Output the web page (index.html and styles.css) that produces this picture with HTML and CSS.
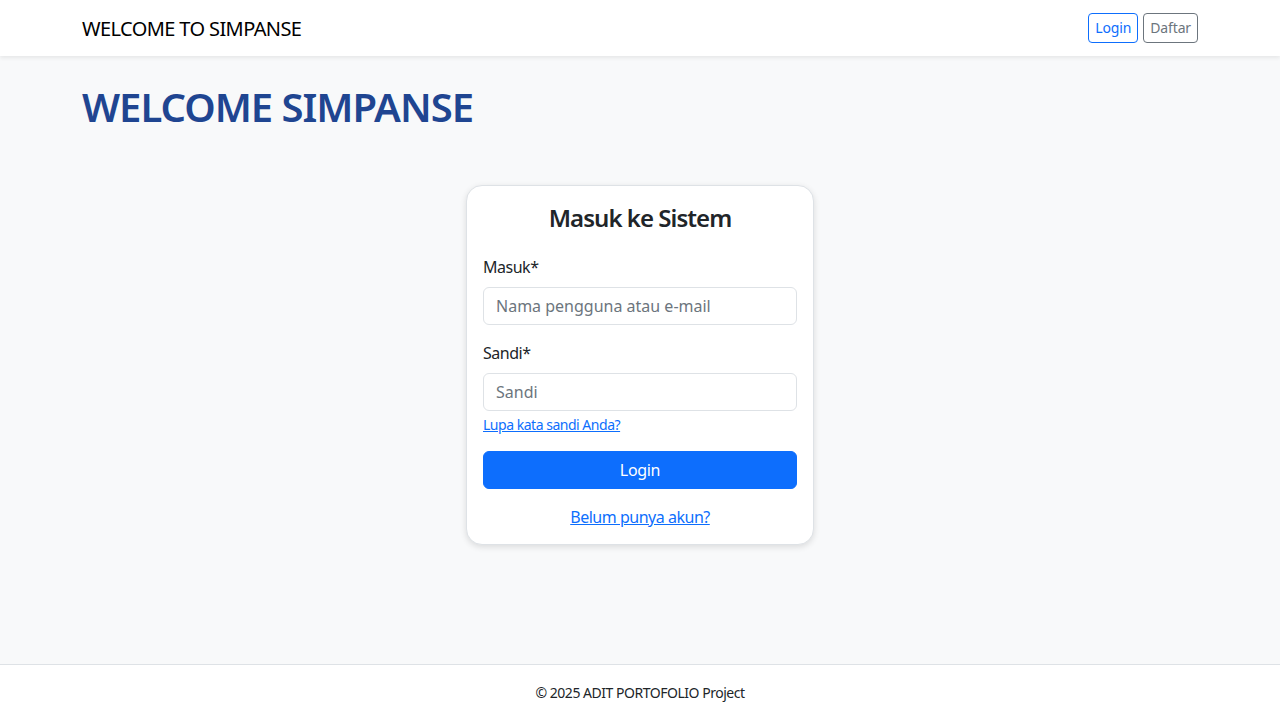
FILE: index.html
```html
<!DOCTYPE html>
<html lang="id">
<head>
<meta charset="utf-8">
<title>Simpanse</title>
<link rel="stylesheet" href="styles.css">
</head>
<body>
<nav class="navbar">
  <div class="container nav-inner">
    <a class="brand" href="#">WELCOME TO SIMPANSE</a>
    <div class="nav-actions">
      <a class="btn-sm btn-outline-primary" href="#">Login</a>
      <a class="btn-sm btn-outline-secondary" href="#">Daftar</a>
    </div>
  </div>
</nav>
<main class="container main">
  <h1 class="page-title">WELCOME SIMPANSE</h1>
  <div class="card">
    <h3 class="card-title">Masuk ke Sistem</h3>
    <form class="form">
      <div class="field">
        <label class="label" for="user">Masuk*</label>
        <input class="input" id="user" type="text" placeholder="Nama pengguna atau e-mail">
      </div>
      <div class="field">
        <label class="label" for="pass">Sandi*</label>
        <input class="input" id="pass" type="password" placeholder="Sandi">
        <a class="forgot" href="#">Lupa kata sandi Anda?</a>
      </div>
      <button class="btn-primary" type="button">Login</button>
      <div class="register"><a href="#">Belum punya akun?</a></div>
    </form>
  </div>
</main>
<footer class="footer">© 2025 ADIT PORTOFOLIO Project</footer>
</body>
</html>
```
FILE: styles.css
```css
* { box-sizing: border-box; }
html, body { margin: 0; padding: 0; }
body {
  font-family: "Noto Sans", "Open Sans", sans-serif;
  font-size: 16px;
  line-height: 1.5;
  letter-spacing: -0.03em;
  color: #212529;
  background: #f8f9fa;
  min-height: 100vh;
  display: flex;
  flex-direction: column;
}
.container {
  width: 1140px;
  margin: 0 auto;
  padding: 0 12px;
}
.navbar {
  background: #fff;
  height: 56px;
  box-shadow: 0 2px 4px rgba(0,0,0,0.075);
  display: flex;
  align-items: center;
}
.nav-inner {
  display: flex;
  justify-content: space-between;
  align-items: center;
}
.brand {
  font-size: 20px;
  color: #000;
  text-decoration: none;
  line-height: 30px;
  margin-top: 2px;
  letter-spacing: -0.03em;
}
.nav-actions { display: flex; gap: 5px; }
.btn-sm {
  display: inline-block;
  font-size: 14px;
  line-height: 20px;
  padding: 4px 6px;
  border: 1px solid;
  border-radius: 4px;
  text-decoration: none;
  letter-spacing: -0.01em;
}
.btn-outline-primary { color: #0d6efd; border-color: #0d6efd; }
.btn-outline-secondary { color: #6c757d; border-color: #6c757d; }
.main {
  flex: 1;
  padding-top: 27px;
}
.page-title {
  margin: 0 0 54px;
  font-size: 40px;
  line-height: 48px;
  font-weight: 600;
  letter-spacing: -0.025em;
  color: #1f4591;
}
.card {
  width: 348px;
  margin: 0 auto;
  background: #fff;
  border: 1px solid #dee2e6;
  border-radius: 16px;
  box-shadow: 0 2px 6px rgba(0,0,0,0.12);
  padding: 15px 16px 15px;
}
.card-title {
  margin: 0 0 21px;
  text-align: center;
  font-size: 24px;
  line-height: 33px;
  font-weight: 600;
  letter-spacing: -0.04em;
  color: #212529;
}
.form { display: flex; flex-direction: column; }
.field { display: flex; flex-direction: column; margin-bottom: 16px; }
.label { margin-bottom: 8px; }
.input {
  font: inherit;
  letter-spacing: 0;
  height: 38px;
  padding: 6px 12px;
  border: 1px solid #dee2e6;
  border-radius: 6px;
  color: #212529;
  background: #fff;
}
.input::placeholder { color: #6c757d; }
.forgot {
  margin-top: 3px;
  font-size: 14px;
  line-height: 21px;
  color: #0d6efd;
  align-self: flex-start;
}
.btn-primary {
  font: inherit;
  letter-spacing: -0.02em;
  height: 38px;
  border: 1px solid #0d6efd;
  background: #0d6efd;
  color: #fff;
  border-radius: 6px;
  margin-bottom: 16px;
}
.register { text-align: center; }
.register a { color: #0d6efd; }
.footer {
  background: #fff;
  border-top: 1px solid #dee2e6;
  text-align: center;
  font-size: 14px;
  line-height: 21px;
  padding: 17px 0;
  color: #212529;
}
```
